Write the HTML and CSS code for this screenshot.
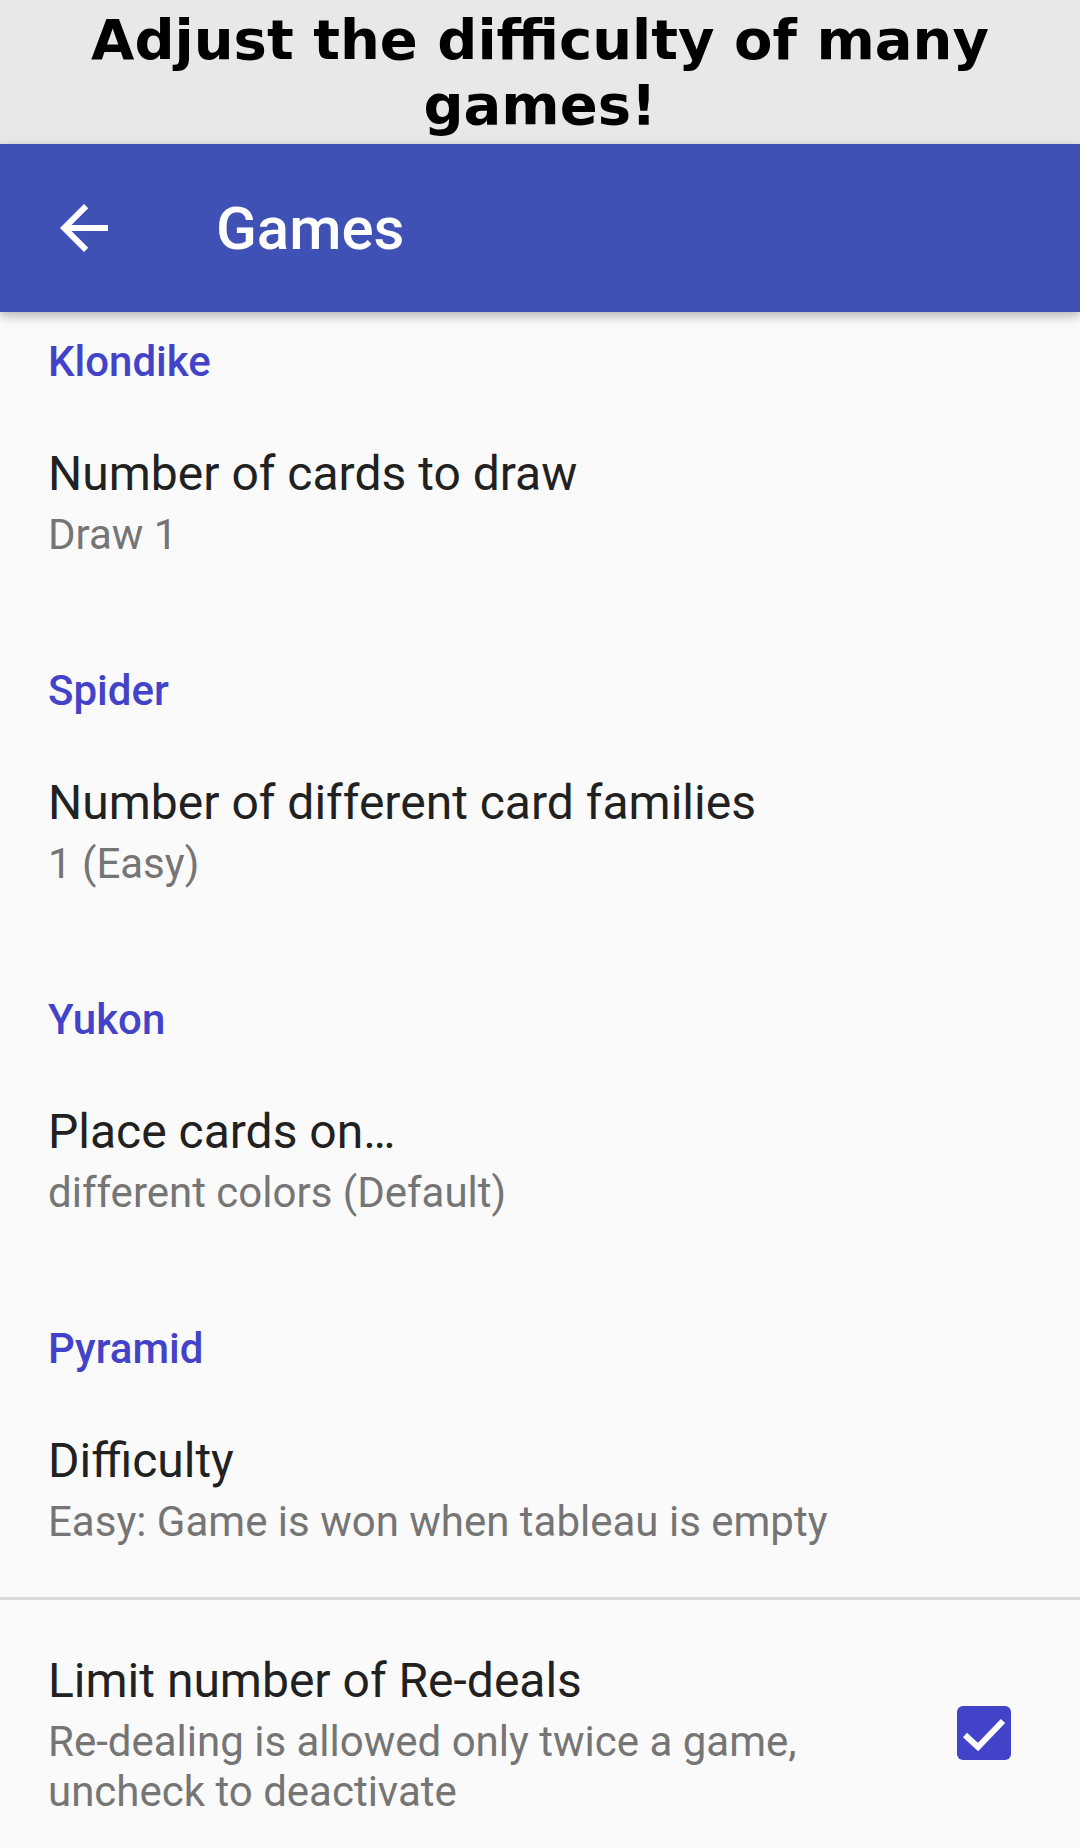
FILE: index.html
```html
<!DOCTYPE html>
<html>
<head>
<meta charset="utf-8">
<link rel="stylesheet" href="styles.css">
</head>
<body>
<div class="banner">Adjust the difficulty of many games!</div>
<header class="appbar">
  <div class="nav-icon">
    <svg width="72" height="72" viewBox="0 0 24 24"><path fill="#fff" d="M20 11H7.83l5.59-5.59L12 4l-8 8 8 8 1.41-1.41L7.83 13H20v-2z"/></svg>
  </div>
  <div class="appbar-title">Games</div>
</header>
<main class="list">
  <section class="section">
    <div class="category">Klondike</div>
    <div class="pref">
      <div class="pref-text">
        <div class="pref-title">Number of cards to draw</div>
        <div class="pref-summary">Draw 1</div>
      </div>
    </div>
  </section>
  <section class="section">
    <div class="category">Spider</div>
    <div class="pref">
      <div class="pref-text">
        <div class="pref-title">Number of different card families</div>
        <div class="pref-summary">1 (Easy)</div>
      </div>
    </div>
  </section>
  <section class="section">
    <div class="category">Yukon</div>
    <div class="pref">
      <div class="pref-text">
        <div class="pref-title">Place cards on…</div>
        <div class="pref-summary">different colors (Default)</div>
      </div>
    </div>
  </section>
  <section class="section last">
    <div class="category">Pyramid</div>
    <div class="pref">
      <div class="pref-text">
        <div class="pref-title">Difficulty</div>
        <div class="pref-summary">Easy: Game is won when tableau is empty</div>
      </div>
    </div>
    <div class="divider"></div>
    <div class="pref check-pref">
      <div class="pref-text">
        <div class="pref-title">Limit number of Re-deals</div>
        <div class="pref-summary">Re-dealing is allowed only twice a game, uncheck to deactivate</div>
      </div>
      <div class="checkbox">
        <svg width="54" height="54" viewBox="0 0 54 54"><rect x="0" y="0" width="54" height="54" rx="6" fill="#4343c9"/><path d="M8 29 L21 41 L46 15" fill="none" stroke="#fff" stroke-width="6"/></svg>
      </div>
    </div>
  </section>
</main>
</body>
</html>
```
FILE: styles.css
```css
* { box-sizing: border-box; }
html, body {
  margin: 0;
  padding: 0;
  width: 1080px;
  height: 1848px;
  overflow: hidden;
  background: #fafafa;
}
body {
  font-family: Roboto, "Liberation Sans", sans-serif;
}
.banner {
  height: 144px;
  background: #e8e8e8;
  padding-top: 7px;
  font-family: "DejaVu Sans", sans-serif;
  font-weight: bold;
  font-size: 56px;
  line-height: 65px;
  text-align: center;
  color: #000;
}
.appbar {
  position: relative;
  z-index: 2;
  height: 168px;
  background: #3f51b5;
  display: flex;
  align-items: center;
  box-shadow: 0 4px 10px rgba(0,0,0,0.28);
}
.nav-icon {
  width: 72px;
  height: 72px;
  margin-left: 48px;
}
.nav-icon svg { display: block; }
.appbar-title {
  margin-left: 96px;
  color: #fff;
  font-weight: 500;
  font-size: 60px;
  line-height: 72px;
  padding-top: 2px;
}
.list {
  display: flex;
  flex-direction: column;
}
.category {
  padding: 57px 48px 0 48px;
  color: #4343c9;
  font-weight: 500;
  font-size: 42px;
  line-height: 48px;
}
.section:first-child .category {
  padding-top: 26px;
}
.pref {
  display: flex;
  align-items: center;
  padding: 60px 48px 50px 48px;
}
.pref-text {
  flex: 1;
  min-width: 0;
}
.pref-title {
  color: #212121;
  font-size: 48px;
  line-height: 56px;
}
.pref-summary {
  margin-top: 8px;
  color: #757575;
  font-size: 42px;
  line-height: 50px;
}
.divider {
  height: 3px;
  background: #d9d9d9;
}
.check-pref {
  padding: 53px 69px 40px 48px;
}
.checkbox {
  width: 54px;
  height: 54px;
  margin-left: 40px;
  margin-top: -4px;
}
.checkbox svg { display: block; }
```
